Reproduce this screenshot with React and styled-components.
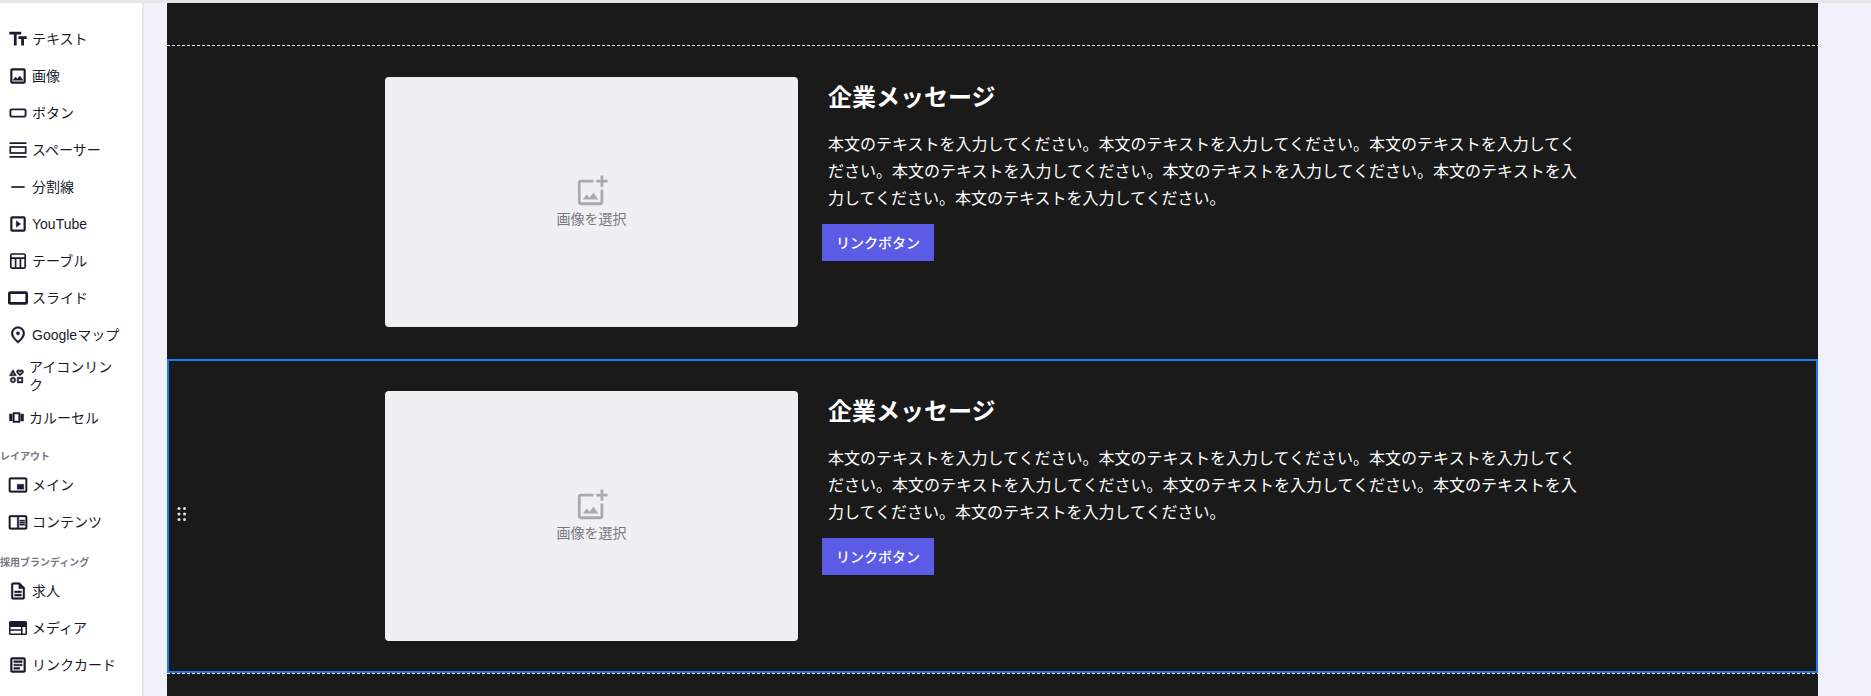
import React from "react"
import styled, { createGlobalStyle } from "styled-components"
import {
  MdTextFields,
  MdOutlineImage,
  MdHorizontalRule,
  MdOutlineSlideshow,
  MdOutlinePlace,
  MdOutlineInterests,
  MdOutlineViewCarousel,
  MdPictureInPictureAlt,
  MdOutlineChromeReaderMode,
  MdOutlineDescription,
  MdOutlineArticle,
  MdOutlineAddPhotoAlternate,
} from "react-icons/md"

const FONT = `"Liberation Sans", "Noto Sans CJK JP", sans-serif`

const GlobalStyle = createGlobalStyle`
  html, body {
    margin: 0;
    height: 696px;
    overflow: hidden;
    font-family: ${FONT};
  }
`

const Page = styled.div`
  display: flex;
  height: 696px;
  box-sizing: border-box;
  border-top: 3px solid #e6e6e6;
  background: #f0f1fb;
`

const Sidebar = styled.aside`
  width: 144px;
  flex: none;
  box-sizing: border-box;
  border-right: 2px solid #e4e4ee;
  background: #fff;
  padding-top: 17px;
  color: #181b2e;
`

const Row = styled.div`
  display: flex;
  align-items: center;
  gap: 4px;
  min-height: 37px;
  box-sizing: border-box;
  padding: 5px 20px 5px 8px;
  font-size: 14px;
  line-height: 18px;
  svg {
    flex: none;
    display: block;
  }
  /* the md icons carry an empty bounding path, keep it unstroked */
  svg path[fill="none"] {
    stroke: none;
  }
`

const GroupLabel = styled.div`
  font-size: 10px;
  font-weight: 700;
  line-height: 14px;
  color: #777783;
  margin: ${(p) => p.$top}px 0 ${(p) => p.$bottom}px;
  white-space: nowrap;
`

const Canvas = styled.main`
  flex: 1;
  margin: 0 53px 0 23px;
  background: #1a1a1a;
  overflow: hidden;
`

const TopStub = styled.div`
  height: 42px;
`

const Section = styled.section`
  position: relative;
  height: ${(p) => (p.$selected ? 314 : 313)}px;
  box-sizing: border-box;
  padding-top: ${(p) => (p.$selected ? 30 : 31)}px;
  display: flex;
  justify-content: center;
  ${(p) => p.$selected && "border: 2px solid #1a7cf5;"}
`

const DashLine = styled.div`
  height: 1px;
  background: repeating-linear-gradient(to right, #e8e8e8 0 3px, transparent 3px 5px);
`

const Inner = styled.div`
  width: 1215px;
  flex: none;
  display: flex;
  align-items: flex-start;
`

const ImageBox = styled.div`
  width: 413px;
  height: 250px;
  flex: none;
  box-sizing: border-box;
  padding-bottom: 2px;
  border-radius: 4px;
  background: #f0f0f3;
  display: flex;
  flex-direction: column;
  align-items: center;
  justify-content: center;
  color: #a9a9b2;
`

const ImageLabel = styled.span`
  font-size: 14px;
  line-height: 20px;
  color: #787882;
  margin-top: 1px;
`

const Body = styled.div`
  width: 760px;
  margin-left: 30px;
  color: #fff;
`

const Title = styled.h2`
  margin: 3px 0 0;
  font-size: 24px;
  line-height: 36px;
  font-weight: 700;
`

const Text = styled.p`
  margin: 15px 0 0;
  font-size: 16px;
  line-height: 27.2px;
`

const LinkButton = styled.a`
  display: flex;
  align-items: center;
  justify-content: center;
  width: 112px;
  height: 37px;
  margin: 11px 0 0 -6px;
  background: #5b5be6;
  color: #fff;
  font-size: 14px;
  font-weight: 500;
`

const DragHandle = styled.svg`
  position: absolute;
  left: 8px;
  top: 145px;
  display: block;
`

const SpacerIcon = () => (
  <svg width="20" height="20" viewBox="0 0 20 20" fill="none" stroke="currentColor" strokeWidth="1.7">
    <path d="M1.500 3.200h17M1.500 16.800h17" />
    <rect x="2.300" y="7" width="15.400" height="6" />
  </svg>
)

const ButtonIcon = () => (
  <svg width="20" height="20" viewBox="0 0 20 20" fill="none" stroke="currentColor" strokeWidth="1.900">
    <rect x="2.400" y="6.400" width="15.200" height="7.200" rx="1.400" />
  </svg>
)

const TableIcon = () => (
  <svg width="20" height="20" viewBox="0 0 20 20" fill="none" stroke="currentColor" strokeWidth="1.700">
    <rect x="2.800" y="3" width="14.400" height="14.200" rx="1.500" />
    <path d="M2.800 7.200h14.400M7.600 7.200v10M12.400 7.200v10" />
  </svg>
)

const SlideIcon = () => (
  <svg width="20" height="20" viewBox="0 0 20 20" fill="none" stroke="currentColor" strokeWidth="2.600">
    <rect x="1.300" y="4.600" width="17.400" height="10.800" rx="1" />
  </svg>
)

const MediaIcon = () => (
  <svg width="20" height="20" viewBox="0 0 20 20">
    <path
      fill="currentColor"
      fillRule="evenodd"
      d="M2.500 3h15A1.500 1.500 0 0 1 19 4.500v11a1.500 1.500 0 0 1-1.500 1.500h-15A1.500 1.500 0 0 1 1 15.500v-11A1.500 1.500 0 0 1 2.500 3zM2.500 9v2.300H13V9zm0 3.800v2.700H13v-2.700zM14.500 9v6.500h3V9z"
    />
  </svg>
)

const items = [
  { label: "テキスト", icon: <MdTextFields size={22} style={{ margin: "0 -1px" }} /> },
  { label: "画像", icon: <MdOutlineImage size={20} strokeWidth={0.6} /> },
  { label: "ボタン", icon: <ButtonIcon /> },
  { label: "スペーサー", icon: <SpacerIcon /> },
  { label: "分割線", icon: <MdHorizontalRule size={20} /> },
  { label: "YouTube", icon: <MdOutlineSlideshow size={20} strokeWidth={0.6} /> },
  { label: "テーブル", icon: <TableIcon /> },
  { label: "スライド", icon: <SlideIcon /> },
  { label: "Googleマップ", icon: <MdOutlinePlace size={20} strokeWidth={0.6} /> },
  { label: "アイコンリンク", icon: <MdOutlineInterests size={17} strokeWidth={0.6} /> },
  { label: "カルーセル", icon: <MdOutlineViewCarousel size={17} strokeWidth={0.6} /> },
]

const layoutItems = [
  { label: "メイン", icon: <MdPictureInPictureAlt size={20} strokeWidth={0.4} /> },
  { label: "コンテンツ", icon: <MdOutlineChromeReaderMode size={20} strokeWidth={0.4} /> },
]

const brandingItems = [
  { label: "求人", icon: <MdOutlineDescription size={20} strokeWidth={0.6} /> },
  { label: "メディア", icon: <MediaIcon /> },
  { label: "リンクカード", icon: <MdOutlineArticle size={20} strokeWidth={0.6} /> },
]

const body = "本文のテキストを入力してください。".repeat(7)

function MenuRows({ rows }) {
  return rows.map((item) => (
    <Row key={item.label}>
      {item.icon}
      <span>{item.label}</span>
    </Row>
  ))
}

function MessageSection({ selected }) {
  return (
    <Section $selected={selected}>
      {selected && (
        <DragHandle width="10" height="16" viewBox="0 0 10 16" fill="#e2e2e2">
          <circle cx="2" cy="2.500" r="1.500" />
          <circle cx="7.500" cy="2.500" r="1.500" />
          <circle cx="2" cy="8" r="1.500" />
          <circle cx="7.500" cy="8" r="1.500" />
          <circle cx="2" cy="13.500" r="1.500" />
          <circle cx="7.500" cy="13.500" r="1.500" />
        </DragHandle>
      )}
      <Inner>
        <ImageBox>
          <MdOutlineAddPhotoAlternate size={34} />
          <ImageLabel>画像を選択</ImageLabel>
        </ImageBox>
        <Body>
          <Title>企業メッセージ</Title>
          <Text>{body}</Text>
          <LinkButton>リンクボタン</LinkButton>
        </Body>
      </Inner>
    </Section>
  )
}

export default function App() {
  return (
    <>
      <GlobalStyle />
      <Page>
        <Sidebar>
          <MenuRows rows={items} />
          <GroupLabel $top={14} $bottom={2}>レイアウト</GroupLabel>
          <MenuRows rows={layoutItems} />
          <GroupLabel $top={16} $bottom={2}>採用ブランディング</GroupLabel>
          <MenuRows rows={brandingItems} />
        </Sidebar>
        <Canvas>
          <TopStub />
          <DashLine />
          <MessageSection />
          <MessageSection selected />
          <DashLine />
        </Canvas>
      </Page>
    </>
  )
}
